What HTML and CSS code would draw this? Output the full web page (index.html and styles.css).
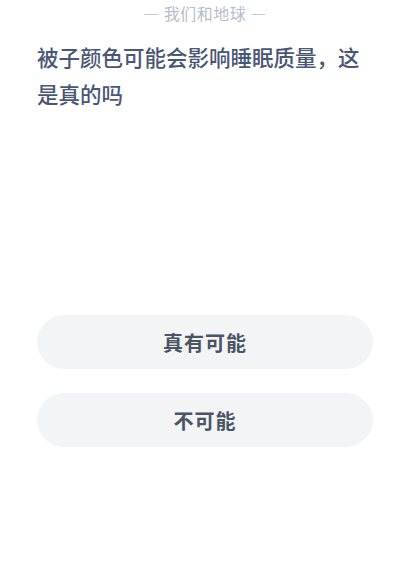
FILE: index.html
```html
<!DOCTYPE html>
<html lang="zh">
<head>
<meta charset="utf-8">
<title>我们和地球</title>
<link rel="stylesheet" href="styles.css">
</head>
<body>
<main class="quiz">
  <header class="quiz-source">— 我们和地球 —</header>
  <h1 class="quiz-question">被子颜色可能会影响睡眠质量，这是真的吗</h1>
  <div class="quiz-options">
    <button class="option" type="button">真有可能</button>
    <button class="option" type="button">不可能</button>
  </div>
</main>
</body>
</html>
```
FILE: styles.css
```css
* { box-sizing: border-box; }

html, body {
  margin: 0;
  padding: 0;
  background: #ffffff;
}

body {
  font-family: "Noto Sans CJK SC", "Noto Sans", sans-serif;
}

.quiz {
  display: flex;
  flex-direction: column;
  padding: 0 40px 0 37px;
}

.quiz-source {
  text-align: center;
  font-size: 16px;
  line-height: 26px;
  color: #b7becb;
  letter-spacing: 0.5px;
}

.quiz-question {
  margin: 12px 0 0;
  font-size: 21.5px;
  font-weight: 500;
  line-height: 37px;
  color: #4a5676;
}

.quiz-options {
  display: flex;
  flex-direction: column;
  gap: 24px;
  margin-top: 203px;
}

.option {
  height: 54px;
  border: none;
  border-radius: 27px;
  background: #f3f4f6;
  font-family: inherit;
  font-size: 20px;
  font-weight: 700;
  color: #4a5465;
  letter-spacing: 1px;
}
```
